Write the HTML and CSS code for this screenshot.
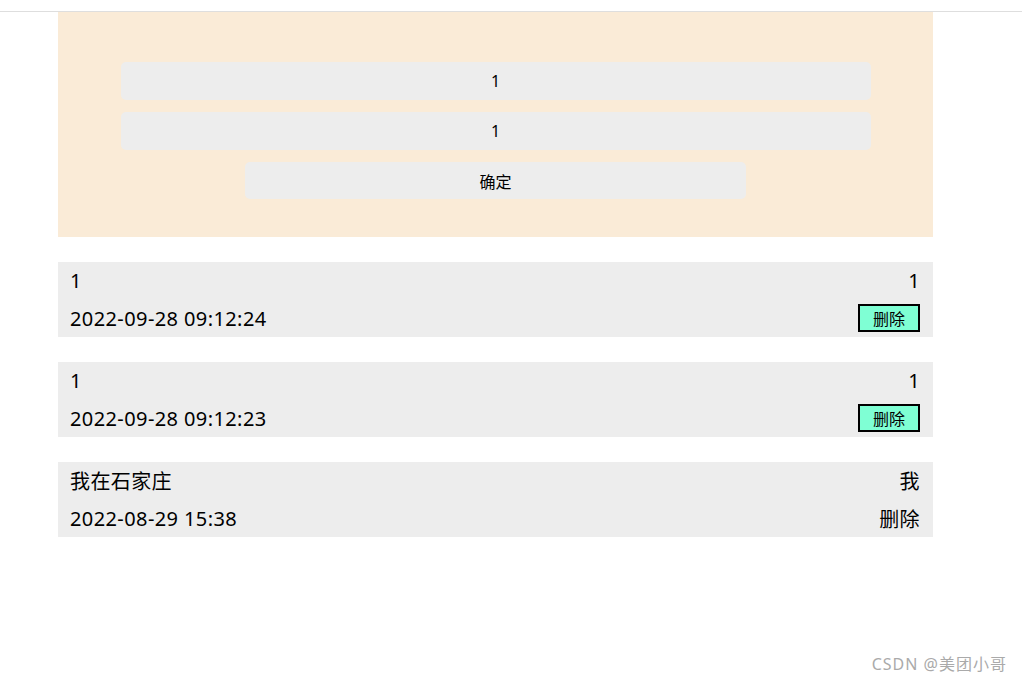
FILE: index.html
```html
<!DOCTYPE html>
<html lang="zh-CN">
<head>
    <meta charset="UTF-8"/>
    <title>留言板</title>
    <link rel="stylesheet" href="styles.css">
</head>
<body>
<div class="topbar"></div>

<div class="page">
    <section class="form-box">
        <input class="field" type="text" value="1"/>
        <input class="field" type="text" value="1"/>
        <button class="submit">确定</button>
    </section>

    <ul class="list">
        <li class="item">
            <div class="row"><span>1</span><span>1</span></div>
            <div class="row"><span>2022-09-28 09:12:24</span><button class="del">删除</button></div>
        </li>
        <li class="item">
            <div class="row"><span>1</span><span>1</span></div>
            <div class="row"><span>2022-09-28 09:12:23</span><button class="del">删除</button></div>
        </li>
        <li class="item">
            <div class="row"><span>我在石家庄</span><span>我</span></div>
            <div class="row"><span>2022-08-29 15:38</span><span>删除</span></div>
        </li>
    </ul>
</div>

<div class="watermark">CSDN @美团小哥</div>
</body>
</html>
```

FILE: styles.css
```css
body {
    margin: 0;
    font-family: "Noto Sans", "Noto Sans CJK SC", sans-serif;
    background: #fff;
    color: #000;
}

.topbar {
    height: 11px;
    border-bottom: 1px solid #dedede;
}

.page {
    width: 875px;
    margin-left: 58px;
}

.form-box {
    background: #faebd7;
    height: 225px;
    padding-top: 50px;
    box-sizing: border-box;
    display: flex;
    flex-direction: column;
    align-items: center;
    gap: 12px;
}

.field {
    width: 750px;
    height: 38px;
    box-sizing: border-box;
    border: none;
    border-radius: 5px;
    background: #ededed;
    text-align: center;
    font-family: inherit;
    font-size: 16px;
    outline: none;
}

.submit {
    width: 501px;
    height: 37px;
    border: none;
    border-radius: 5px;
    background: #ededed;
    font-family: inherit;
    font-size: 16px;
    color: #000;
}

.list {
    list-style: none;
    margin: 25px 0 0;
    padding: 0;
    display: flex;
    flex-direction: column;
    gap: 25px;
}

.item {
    background: #ededed;
    height: 75px;
    padding: 0 13px 0 12px;
    display: flex;
    flex-direction: column;
    font-size: 20px;
    letter-spacing: 0.4px;
}

.row {
    flex: 1;
    display: flex;
    justify-content: space-between;
    align-items: center;
}

.del {
    width: 62px;
    height: 28px;
    padding: 0;
    border: 2px solid #000;
    background: #7fffd4;
    font-family: inherit;
    font-size: 16px;
    letter-spacing: 0;
    color: #000;
}

.watermark {
    position: absolute;
    right: 15px;
    top: 651px;
    font-size: 16px;
    letter-spacing: 1px;
    color: #aaa;
}
```
